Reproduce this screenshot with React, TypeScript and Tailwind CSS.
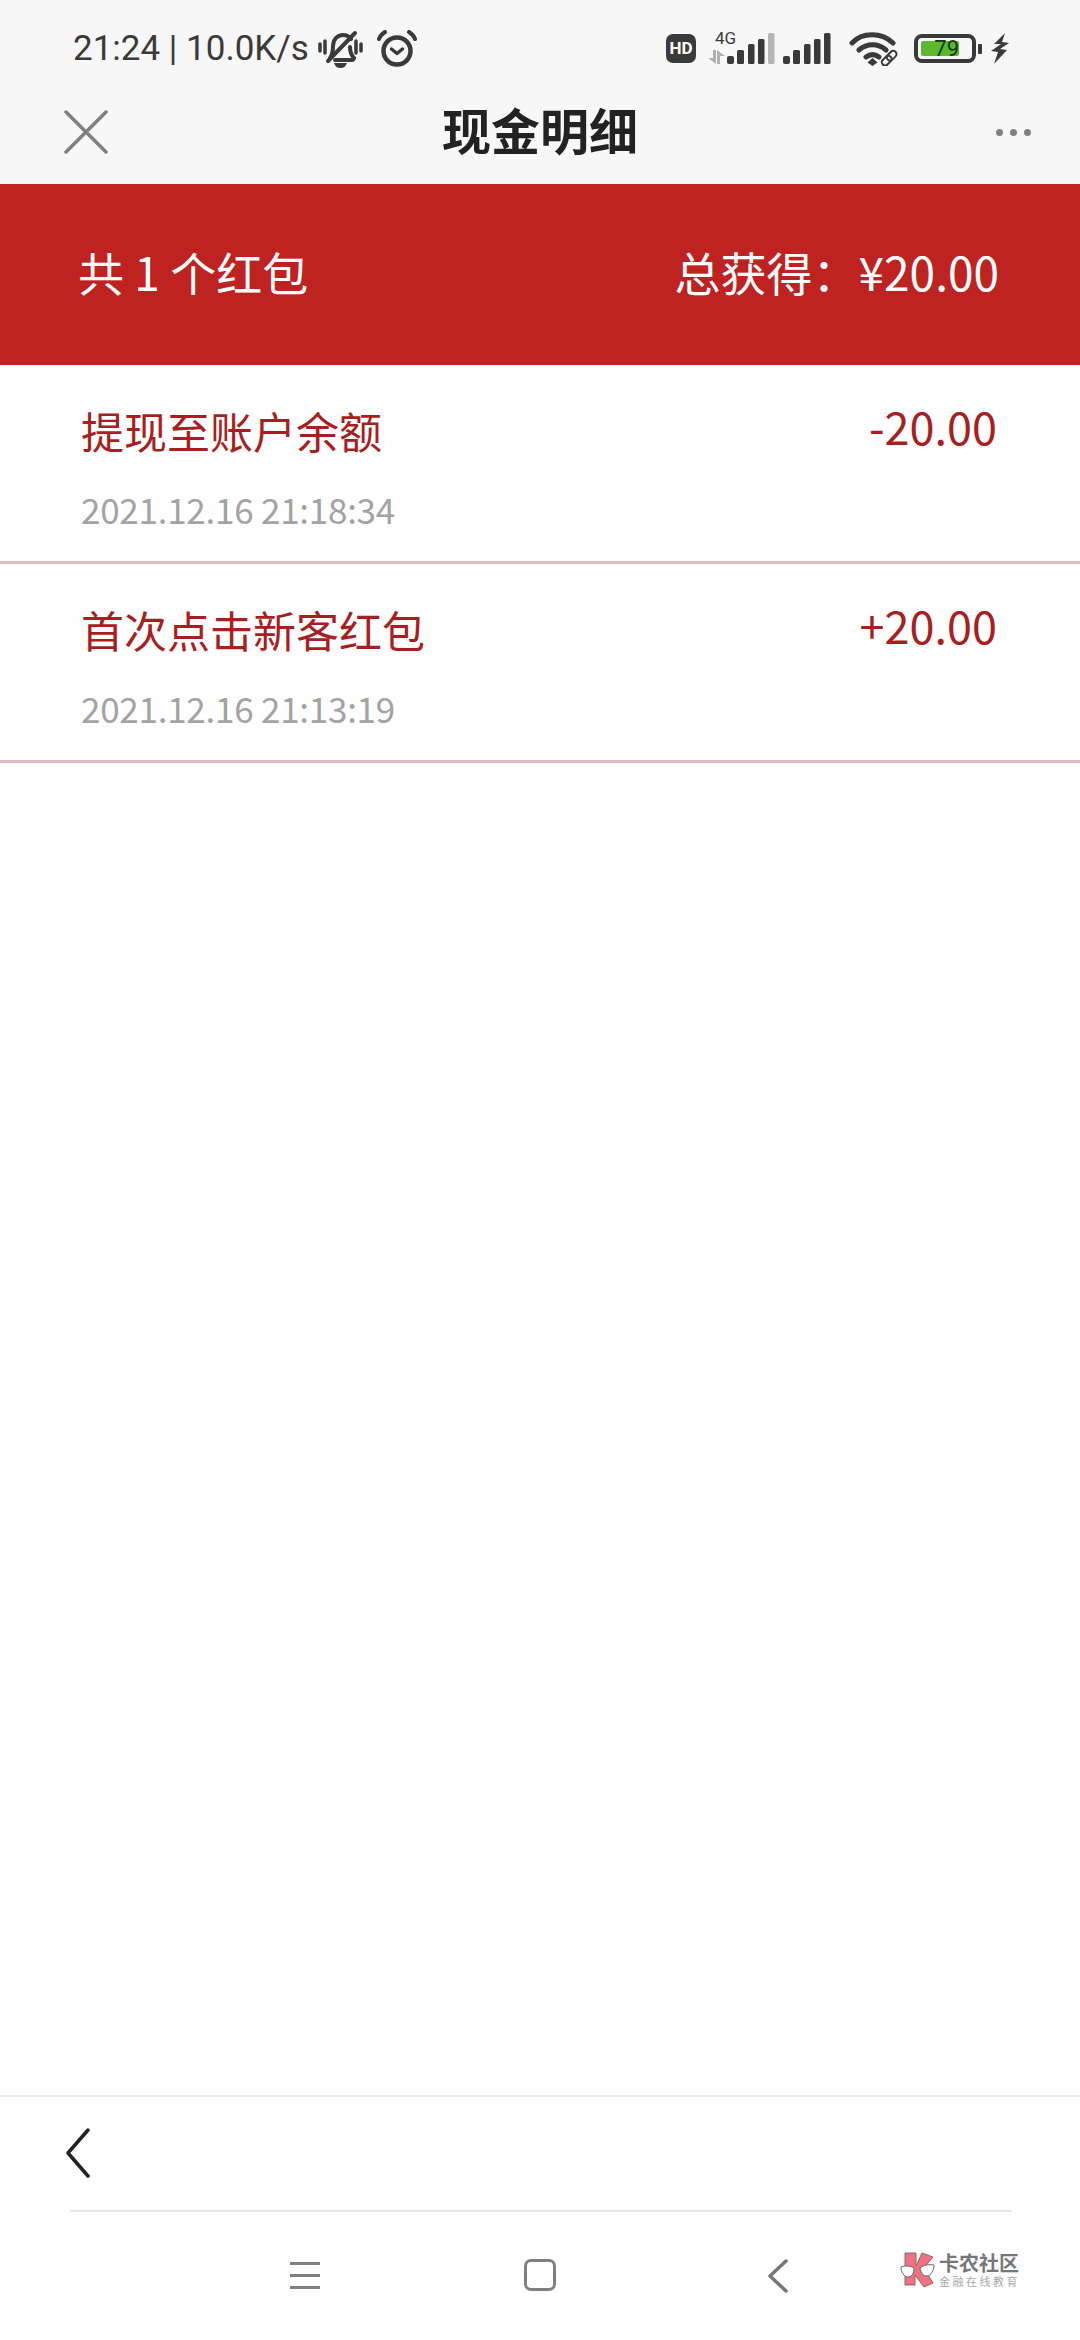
const cjk = { fontFamily: '"Noto Sans CJK SC", "Noto Sans", sans-serif' };
const roboto = { fontFamily: 'Roboto, sans-serif' };

const records = [
  { title: '提现至账户余额', amount: '-20.00', time: '2021.12.16 21:18:34' },
  { title: '首次点击新客红包', amount: '+20.00', time: '2021.12.16 21:13:19' },
];

const MutedBell = () => (
  <svg width="45" height="38" viewBox="0 0 45 38" fill="none" stroke="#3a3a3a" strokeLinecap="round" className="ml-[9px]">
    <path d="M2 14v7M7 11v12M38 11v12M43 14v7" strokeWidth="3.500" />
    <path d="M12 28c2-3 3-6 3-12 0-6 4-11 10-11 3 0 6 1 8 4" strokeWidth="4" />
    <path d="M32 17c0 5 1 8 4 11 0 1-1 2-2 2H17" strokeWidth="4" />
    <path d="M10 31 37 3" strokeWidth="4" />
    <path d="M16 33h13c-1 3-3 5-6.500 5s-5.500-2-6.500-5z" fill="#3a3a3a" stroke="none" />
  </svg>
);

const AlarmClock = () => (
  <svg width="40" height="37" viewBox="0 0 40 37" fill="none" stroke="#3a3a3a" strokeLinecap="round" strokeLinejoin="round" className="ml-[14px]">
    <circle cx="20" cy="21" r="13.500" strokeWidth="4.500" />
    <path d="m14.500 19 5.500 4.500 5.500-4.500" strokeWidth="3.500" />
    <path d="M2 9c1-3 3-5 6-7M38 9c-1-3-3-5-6-7" strokeWidth="4" />
  </svg>
);

const Signal = ({ faded }: { faded?: boolean }) => (
  <svg width="48" height="31" viewBox="0 0 48 31">
    <rect x="0" y="23" width="7" height="8" rx="2" fill="#3a3a3a" />
    <rect x="10" y="17" width="7" height="14" rx="1.500" fill="#3a3a3a" />
    <rect x="21" y="11" width="6.500" height="20" rx="1.500" fill="#3a3a3a" />
    <rect x="31" y="6" width="6.500" height="25" rx="1.500" fill="#3a3a3a" />
    <rect x="41" y="0" width="6.500" height="31" rx="1.500" fill={faded ? '#b5b5b5' : '#3a3a3a'} />
  </svg>
);

// data direction arrows beside the 4G mark
const DataArrows = () => (
  <svg width="17" height="14" viewBox="0 0 17 14" fill="#b0b0b0" className="absolute bottom-0 -left-[19px]">
    <path d="M5 0h3v14L0 8h5zM9 0l8 6h-5v8H9z" />
  </svg>
);

const Wifi = () => (
  <svg width="52" height="34" viewBox="0 0 52 34" fill="none" stroke="#3a3a3a" strokeLinecap="round">
    <path d="M3 11C13 0 33 0 44 11M10 18c8-7 19-7 27 0M17 25c4-3 9-3 13 0" strokeWidth="5" />
    <path d="m23.500 26 5 4.500-5 3.500-5-3.500z" fill="#3a3a3a" stroke="none" />
    <g stroke="#3a3a3a" strokeWidth="2" transform="rotate(-45 40 26)">
      <rect x="31" y="23" width="11" height="6.500" rx="3.200" fill="#f7f7f7" />
      <rect x="38" y="23" width="11" height="6.500" rx="3.200" />
    </g>
  </svg>
);

const Battery = () => (
  <div className="ml-[13px] flex items-center">
    <div className="h-[29px] w-[62px] rounded-[8px] border-[4px] border-[#3a3a3a] pl-[3px] pt-[3px]">
      <div className="flex h-[15px] w-[38px] items-center justify-end rounded-[2px] bg-[#5cb82c] text-[22px] leading-none text-[#123a10]">
        <span style={roboto}>79</span>
      </div>
    </div>
    <div className="ml-[2px] h-[10px] w-[4px] rounded-[1px] bg-[#3a3a3a]" />
  </div>
);

const Bolt = () => (
  <svg width="18" height="31" viewBox="0 0 18 31" fill="#3a3a3a" className="ml-[9px]">
    <path d="M14 0 3 11h7L0 18l7 1-4 12 13-14-7-1 9-6-7-1z" />
  </svg>
);

const CloseIcon = () => (
  <svg width="44" height="44" viewBox="0 0 44 44" fill="none" stroke="#808080" strokeWidth="3.500" strokeLinecap="round">
    <path d="m2 2 40 40M42 2 2 42" />
  </svg>
);

// community watermark in the lower corner
const Logo = () => (
  <div className="absolute left-[900px] top-[2252px] flex items-center">
    <svg width="36" height="36" viewBox="0 0 36 36">
      <path d="M5 1h11v13l6-13 11 4-9 11 9 15-9 4-9-12v10H5z" fill="#ef7280" stroke="#8a6a6a" strokeWidth="1" />
      <path d="M1 15c5-2 10-1 13 1 0 5-2 9-6 9-4 0-7-5-7-10zM34 13c-5-1-11 0-14 3 1 5 3 8 7 8s7-6 7-11z" fill="#fff" stroke="#666" strokeWidth="1" />
    </svg>
    <div className="ml-[3px] flex flex-col" style={cjk}>
      <span className="text-[20px] font-bold leading-[22px] text-[#777]">卡农社区</span>
      <span className="text-[11px] leading-[14px] tracking-[2.500px] text-[#aaa]">金融在线教育</span>
    </div>
  </div>
);

export default function App() {
  return (
    <div className="relative flex h-[2340px] w-[1080px] flex-col overflow-hidden bg-[#fefefe]" style={cjk}>
      <header className="h-[184px] shrink-0 bg-[#f7f7f7]">
        <div className="flex h-[97px] items-center justify-between pl-[73px] pr-[71px]">
          <div className="flex items-center">
            <span className="text-[35px] leading-none text-[#3a3a3a]" style={roboto}>
              21:24 | 10.0K/s
            </span>
            <MutedBell />
            <AlarmClock />
          </div>
          <div className="flex items-center">
            <div className="flex h-[29px] w-[30px] items-center justify-center rounded-[7px] bg-[#3a3a3a] text-[17px] font-bold leading-none text-white" style={roboto}>
              HD
            </div>
            <div className="relative ml-[31px] h-[31px] w-[48px]">
              <Signal faded />
              <span className="absolute -top-[3px] -left-[12px] text-[17px] leading-none text-[#3a3a3a]" style={roboto}>4G</span>
              <DataArrows />
            </div>
            <div className="ml-[8px]">
              <Signal />
            </div>
            <div className="ml-[18px]">
              <Wifi />
            </div>
            <Battery />
            <Bolt />
          </div>
        </div>
        <div className="relative flex h-[70px] items-center justify-between pl-[64px] pr-[49px]">
          <CloseIcon />
          <h1 className="absolute inset-x-0 pb-[8px] text-center text-[49px] font-bold leading-none text-[#222]">现金明细</h1>
          <div className="flex gap-[7px]">
            <span className="h-[7px] w-[7px] rounded-full bg-[#808080]" />
            <span className="h-[7px] w-[7px] rounded-full bg-[#808080]" />
            <span className="h-[7px] w-[7px] rounded-full bg-[#808080]" />
          </div>
        </div>
      </header>

      <section className="flex h-[181px] shrink-0 items-center justify-between bg-[#bf2321] pb-[8px] pl-[78px] pr-[81px] text-[46px] leading-none text-white">
        <span>共 1 个红包</span>
        <span>总获得：¥20.00</span>
      </section>

      <ul>
        {records.map((r) => (
          <li key={r.time} className="h-[199px] border-b-[3px] border-[#dcbcbc] pl-[81px] pr-[83px] pt-[40px]">
            <div className="flex items-start justify-between text-[#a81f22]">
              <span className="text-[43px] leading-[50px]">{r.title}</span>
              <span className="-mt-[4px] text-[45px] leading-[50px]">{r.amount}</span>
            </div>
            <p className="mt-[33px] text-[35px] leading-[42px] tracking-[-0.25px] text-[#a3a3a3]">{r.time}</p>
          </li>
        ))}
      </ul>

      <footer className="mt-auto h-[245px] border-t-[2px] border-[#e9e9e9]">
        <div className="flex h-[113px] items-center pb-[1px] pl-[66px]">
          <svg width="24" height="50" viewBox="0 0 24 50" fill="none" stroke="#222" strokeWidth="3.500" strokeLinecap="round" strokeLinejoin="round">
            <path d="M22 2 2 25l20 23" />
          </svg>
        </div>
        <div className="ml-[70px] mr-[68px] h-[2px] bg-[#e6e6e6]" />
        <nav className="flex items-start pl-[290px] pt-[47px]">
          <div className="flex w-[30px] flex-col gap-[9px] pt-[3px]">
            <span className="h-[3px] bg-[#808080]" />
            <span className="h-[3px] bg-[#808080]" />
            <span className="h-[3px] bg-[#808080]" />
          </div>
          <div className="ml-[204px] h-[32px] w-[32px] rounded-[7px] border-[3px] border-[#808080]" />
          <svg width="20" height="34" viewBox="0 0 20 34" fill="none" stroke="#777" strokeWidth="3.500" strokeLinecap="round" strokeLinejoin="round" className="ml-[212px]">
            <path d="M18 2 2 17l16 15" />
          </svg>
        </nav>
      </footer>
      <Logo />
    </div>
  );
}
